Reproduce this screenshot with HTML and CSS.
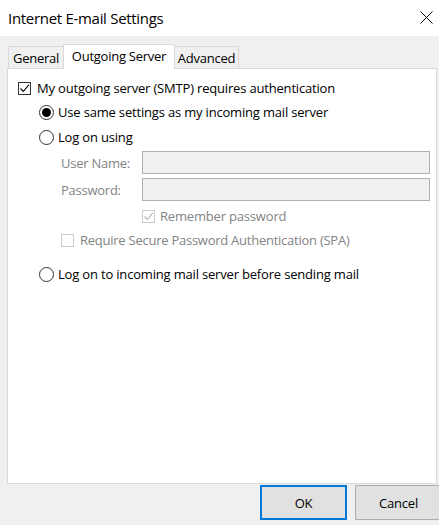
FILE: index.html
```html
<!DOCTYPE html>
<html lang="en">
<head>
<meta charset="utf-8">
<title>Internet E-mail Settings</title>
<link rel="stylesheet" href="styles.css">
</head>
<body>
<div class="window">
  <header class="titlebar">
    <span class="title">Internet E-mail Settings</span>
    <svg class="close" width="13" height="13" viewBox="0 0 13 13"><path d="M0.5 0.5 L12.5 12.5 M12.5 0.5 L0.5 12.5" stroke="#000" stroke-width="1" fill="none"/></svg>
  </header>
  <div class="content">
    <div class="tabs">
      <div class="tab tab-general">General</div>
      <div class="tab tab-active">Outgoing Server</div>
      <div class="tab tab-advanced">Advanced</div>
    </div>
    <div class="panel">
      <label class="row row-auth">
        <span class="check checked"><svg width="11" height="11" viewBox="0 0 11 11"><path d="M1.5 5.5 L4.3 8.5 L9.8 1.8" stroke="#000" stroke-width="1.1" fill="none"/></svg></span>
        <span class="text">My outgoing server (SMTP) requires authentication</span>
      </label>
      <label class="row row-radio">
        <span class="radio selected"><span class="dot"></span></span>
        <span class="text">Use same settings as my incoming mail server</span>
      </label>
      <label class="row row-radio row-logon">
        <span class="radio"></span>
        <span class="text">Log on using</span>
      </label>
      <div class="row row-field row-user">
        <span class="field-label">User Name:</span>
        <span class="input"></span>
      </div>
      <div class="row row-field row-pass">
        <span class="field-label">Password:</span>
        <span class="input"></span>
      </div>
      <label class="row row-remember disabled">
        <span class="check disabled-check"><svg width="11" height="11" viewBox="0 0 11 11"><path d="M1.5 5.5 L4.3 8.5 L9.8 1.8" stroke="#b4b4b4" stroke-width="1.1" fill="none"/></svg></span>
        <span class="text">Remember password</span>
      </label>
      <label class="row row-spa disabled">
        <span class="check disabled-check"></span>
        <span class="text">Require Secure Password Authentication (SPA)</span>
      </label>
      <label class="row row-radio row-before">
        <span class="radio"></span>
        <span class="text">Log on to incoming mail server before sending mail</span>
      </label>
    </div>
  </div>
  <footer class="buttons">
    <button class="btn btn-default">OK</button>
    <button class="btn">Cancel</button>
  </footer>
</div>
</body>
</html>
```
FILE: styles.css
```css
* { box-sizing: border-box; }
html, body {
  margin: 0;
  padding: 0;
  width: 439px;
  height: 525px;
  overflow: hidden;
  background: #f0f0f0;
  font-family: "Open Sans", "Noto Sans", "Liberation Sans", sans-serif;
  color: #000;
}
.window {
  width: 439px;
  height: 525px;
  display: flex;
  flex-direction: column;
}
.titlebar {
  height: 36px;
  background: #fff;
  display: flex;
  align-items: center;
  justify-content: space-between;
  padding: 0 6px 0 8px;
}
.title {
  font-size: 15px;
  letter-spacing: -0.3px;
  margin-top: -1px;
}
.close { display: block; margin-top: -2px; }
.content {
  padding: 8px 2px 0 7px;
}
.tabs {
  display: flex;
  align-items: flex-end;
  height: 24px;
  padding-left: 1px;
  font-size: 13px;
  letter-spacing: -0.25px;
}
.tab {
  height: 22px;
  border: 1px solid #d9d9d9;
  border-bottom: none;
  background: #f0f0f0;
  display: flex;
  align-items: center;
  justify-content: center;
}
.tab-general { width: 55px; border-right: none; padding-top: 1px; }
.tab-active {
  width: 112px;
  height: 25px;
  margin-bottom: -1px;
  background: #fff;
  position: relative;
  z-index: 1;
  padding-bottom: 2px;
}
.tab-advanced { width: 64px; border-left: none; padding-top: 1px; }
.panel {
  height: 416px;
  background: #fff;
  border: 1px solid #d9d9d9;
  padding-top: 7px;
  display: flex;
  flex-direction: column;
  font-size: 13px;
  letter-spacing: -0.18px;
}
.row {
  display: flex;
  align-items: center;
  height: 24px;
}
.row-auth { padding-left: 10px; }
.row-auth .text { margin-left: 6px; }
.check {
  width: 13px;
  height: 13px;
  border: 1px solid #333;
  background: #fff;
  display: flex;
  align-items: center;
  justify-content: center;
  flex: none;
}
.disabled-check { border-color: #cccccc; }
.row-radio { padding-left: 31px; }
.row-radio .text { margin-left: 4px; }
.row-logon { margin-top: 1px; }
.radio {
  width: 15px;
  height: 15px;
  border: 1px solid #333;
  border-radius: 50%;
  background: #fff;
  display: flex;
  align-items: center;
  justify-content: center;
  flex: none;
}
.dot {
  width: 9px;
  height: 9px;
  border-radius: 50%;
  background: #000;
}
.row-field {
  height: 23px;
  padding-left: 53px;
  padding-right: 6px;
  color: #838383;
  letter-spacing: -0.25px;
}
.row-user { margin-top: 2px; }
.row-pass { margin-top: 4px; }
.field-label { width: 81px; flex: none; }
.input {
  flex: 1;
  height: 23px;
  background: #f0f0f0;
  border: 1px solid #adb2b5;
}
.disabled { color: #838383; }
.row-remember { padding-left: 134px; margin-top: 3px; }
.row-remember .text { margin-left: 5px; }
.row-spa { padding-left: 53px; letter-spacing: -0.25px; }
.row-spa .text { margin-left: 6px; }
.row-before { margin-top: 10px; }
.buttons {
  display: flex;
  gap: 8px;
  padding: 1px 0 0 260px;
}
.btn {
  flex: none;
  width: 87px;
  height: 35px;
  margin: 0;
  background: #e1e1e1;
  border: 1px solid #adadad;
  font-family: "Open Sans", "Noto Sans", "Liberation Sans", sans-serif;
  font-size: 13px;
  letter-spacing: -0.2px;
  color: #000;
  padding: 0;
}
.btn-default { border: 2px solid #0078d7; }
```
